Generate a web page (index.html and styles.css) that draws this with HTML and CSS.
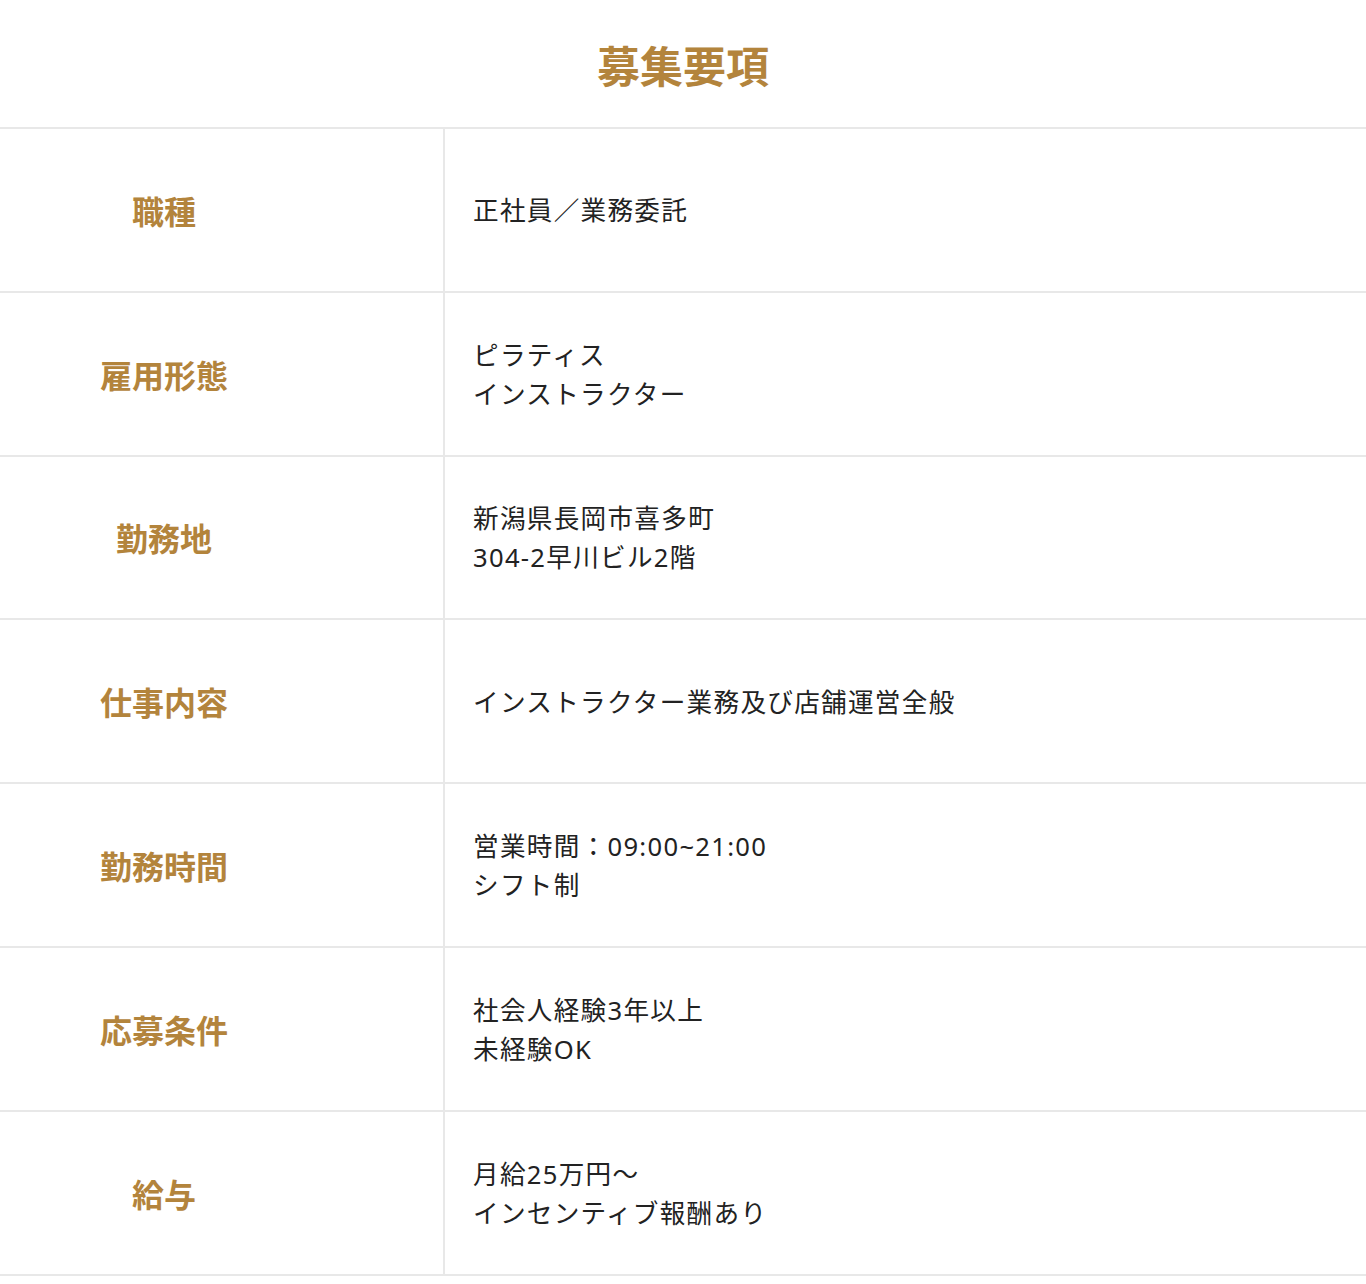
FILE: index.html
```html
<!DOCTYPE html>
<html lang="ja">
<head>
<meta charset="utf-8">
<title>募集要項</title>
<link rel="stylesheet" href="styles.css">
</head>
<body>
<section class="recruit">
  <h2 class="recruit-title">募集要項</h2>
  <div class="recruit-table">
    <div class="row">
      <div class="label">職種</div>
      <div class="value">正社員／業務委託</div>
    </div>
    <div class="row">
      <div class="label">雇用形態</div>
      <div class="value">ピラティス<br>インストラクター</div>
    </div>
    <div class="row">
      <div class="label">勤務地</div>
      <div class="value">新潟県長岡市喜多町<br>304-2早川ビル2階</div>
    </div>
    <div class="row">
      <div class="label">仕事内容</div>
      <div class="value">インストラクター業務及び店舗運営全般</div>
    </div>
    <div class="row">
      <div class="label">勤務時間</div>
      <div class="value">営業時間：09:00~21:00<br>シフト制</div>
    </div>
    <div class="row">
      <div class="label">応募条件</div>
      <div class="value">社会人経験3年以上<br>未経験OK</div>
    </div>
    <div class="row">
      <div class="label">給与</div>
      <div class="value">月給25万円～<br>インセンティブ報酬あり</div>
    </div>
  </div>
</section>
</body>
</html>
```
FILE: styles.css
```css
* { box-sizing: border-box; }
html, body {
  margin: 0;
  padding: 0;
  background: #fff;
}
body {
  font-family: "Noto Sans CJK JP", "Noto Sans", sans-serif;
  color: #222;
}
.recruit-title {
  margin: 0;
  height: 127px;
  display: flex;
  align-items: center;
  justify-content: center;
  font-size: 43px;
  font-weight: 700;
  color: #b3843c;
  line-height: 1;
  padding-top: 2px;
}
.recruit-table {
  border-top: 2px solid #e8e8e8;
}
.row {
  display: grid;
  grid-template-columns: 445px 1fr;
  border-bottom: 2px solid #e8e8e8;
  min-height: 163.8px;
}
.label {
  border-right: 2px solid #e8e8e8;
  display: flex;
  align-items: center;
  justify-content: center;
  padding-right: 115px;
  font-size: 32px;
  font-weight: 700;
  color: #b3843c;
}
.value {
  display: flex;
  flex-direction: column;
  justify-content: center;
  padding-left: 28px;
  padding-top: 2px;
  font-family: "Noto Sans", "Noto Sans CJK JP", sans-serif;
  font-size: 25.6px;
  line-height: 39px;
  letter-spacing: 1.3px;
  color: #222;
}
```
